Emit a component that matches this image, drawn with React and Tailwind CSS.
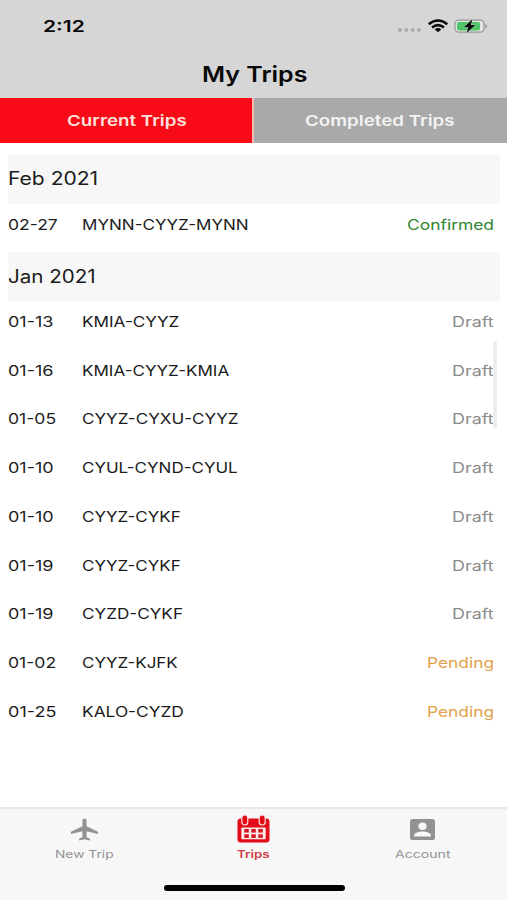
import { useLayoutEffect, useRef, useState } from "react";

// Wide lettering: the text is stretched horizontally to fill its given width.
function WideText({ width, className = "", children }) {
  const ref = useRef(null);
  const [scale, setScale] = useState(1.2);
  useLayoutEffect(() => {
    setScale(width / ref.current.offsetWidth);
  }, [width, children]);
  return (
    <span className={`block shrink-0 ${className}`} style={{ width }}>
      <span
        ref={ref}
        className="inline-block origin-left whitespace-nowrap align-top"
        style={{ transform: `scaleX(${scale})` }}
      >
        {children}
      </span>
    </span>
  );
}

const months = [
  {
    title: "Feb 2021",
    width: 90,
    trips: [["02-27", 49.5, "MYNN-CYYZ-MYNN", 167, "Confirmed"]],
  },
  {
    title: "Jan 2021",
    width: 88,
    trips: [
      ["01-13", 46, "KMIA-CYYZ", 97, "Draft"],
      ["01-16", 46, "KMIA-CYYZ-KMIA", 147, "Draft"],
      ["01-05", 48.5, "CYYZ-CYXU-CYYZ", 157, "Draft"],
      ["01-10", 46, "CYUL-CYND-CYUL", 156, "Draft"],
      ["01-10", 46, "CYYZ-CYKF", 98.5, "Draft"],
      ["01-19", 46, "CYYZ-CYKF", 98.5, "Draft"],
      ["01-19", 46, "CYZD-CYKF", 100.5, "Draft"],
      ["01-02", 48.5, "CYYZ-KJFK", 96, "Pending"],
      ["01-25", 48.5, "KALO-CYZD", 101.5, "Pending"],
    ],
  },
];

const statusStyle = {
  Confirmed: { width: 86.5, color: "text-[#2f8432]" },
  Draft: { width: 42, color: "text-[#8c8c8c]" },
  Pending: { width: 67, color: "text-[#e3a04a]" },
};

function StatusIcons() {
  return (
    <svg className="h-5 w-[92px]" viewBox="0 0 92 20">
      <g fill="#aaa">
        <circle cx="3" cy="14" r="2" />
        <circle cx="9.3" cy="14" r="2" />
        <circle cx="15.6" cy="14" r="2" />
        <circle cx="21.9" cy="14" r="2" />
      </g>
      <g fill="none" stroke="#080808" strokeWidth="2.5">
        <path d="M31.7 8.2Q41 .9 50.3 8.2" />
        <path d="M35 11.4Q41 6.8 47 11.4" />
      </g>
      <path d="M37.6 13.2Q41 10.9 44.4 13.2L41 16.2Z" fill="#080808" />
      <rect x="58" y="4.2" width="29" height="12" rx="3.6" fill="#e1e5e1" stroke="#959795" strokeWidth="1.2" />
      <rect x="60" y="6" width="23" height="8.4" rx="1.8" fill="#4dc568" />
      <path d="M88.4 8Q91.5 10.2 88.4 12.4Z" fill="#8d8f8d" />
      <path d="M75.4 3.2L66.8 11.2H71.2L69.7 16.9L78.3 9H73.8Z" fill="#080808" stroke="#c5e6cc" strokeWidth=".9" paintOrder="stroke" />
    </svg>
  );
}

function PlaneIcon() {
  return (
    <svg className="h-[23px] w-[27px]" viewBox="2 1.5 20 21" preserveAspectRatio="none" fill="#929292">
      <path d="M22 16v-2l-8.5-5V3.5C13.5 2.67 12.83 2 12 2s-1.5.67-1.5 1.5V9L2 14v2l8.5-2.5V19L8 20.5V22l4-1 4 1v-1.5L13.5 19v-5.5z" />
    </svg>
  );
}

function CalendarIcon() {
  return (
    <svg className="h-[28px] w-[33px]" viewBox="0 0 33 28">
      <rect x=".5" y="3.5" width="32" height="24" rx="3" fill="#e20d18" />
      <rect x="4.8" y="0" width="6" height="10" rx="3" fill="#e20d18" stroke="#fae3e3" strokeWidth="1.2" />
      <rect x="22.2" y="0" width="6" height="10" rx="3" fill="#e20d18" stroke="#fae3e3" strokeWidth="1.2" />
      <rect x="4.3" y="12.5" width="24.4" height="11.7" rx="1" fill="#fbeaea" />
      <g fill="#d81820">
        <rect x="7.3" y="14" width="4.5" height="3.6" />
        <rect x="14.3" y="14" width="4.5" height="3.6" />
        <rect x="21.3" y="14" width="4.5" height="3.6" />
        <rect x="7.3" y="19.3" width="4.5" height="3.6" />
        <rect x="14.3" y="19.3" width="4.5" height="3.6" />
        <rect x="21.3" y="19.3" width="4.5" height="3.6" />
      </g>
    </svg>
  );
}

function AccountIcon() {
  return (
    <svg className="h-[21px] w-[25px]" viewBox="0 0 25 21">
      <rect width="25" height="21" rx="2.8" fill="#929292" />
      <ellipse cx="12.5" cy="7.2" rx="4.1" ry="3.7" fill="#f7f7f7" />
      <path d="M4.2 17.5V16.2C4.2 13.7 9.2 12.5 12.5 12.5S20.8 13.7 20.8 16.2V17.5Z" fill="#f7f7f7" />
    </svg>
  );
}

function TabItem({ icon, label, width, className }) {
  return (
    <div className={`flex flex-1 flex-col items-center text-[10.5px] leading-4 ${className}`}>
      <div className="flex h-[37px] items-center justify-center pt-px">{icon}</div>
      <WideText width={width}>{label}</WideText>
    </div>
  );
}

export default function App() {
  return (
    <div className="flex h-[900px] w-[507px] flex-col overflow-hidden bg-white font-['Inter','Liberation_Sans',sans-serif] text-[#1c1c1c]">
      <header className="h-[98px] bg-[#d6d6d6] text-[#080808]">
        <div className="flex h-[52px] items-center justify-between pr-[18px] pl-[43px]">
          <WideText width={42} className="text-[16px] font-semibold">2:12</WideText>
          <StatusIcons />
        </div>
        <div className="flex h-[46px] items-center justify-center pl-[2px]">
          <WideText width={106} className="text-[21px] leading-7 font-semibold">My Trips</WideText>
        </div>
      </header>

      <div className="flex h-[44.5px] shrink-0 text-[15px] font-semibold">
        <div className="flex w-[254px] items-center justify-center border-r-2 border-[#f3bdb6] bg-[#f80b16] pt-px pl-px text-[#fde0dc]">
          <WideText width={120}>Current Trips</WideText>
        </div>
        <div className="flex flex-1 items-center justify-center bg-[#a9a9a9] pt-px pr-px text-[#f3f3f3]">
          <WideText width={150}>Completed Trips</WideText>
        </div>
      </div>

      <main className="relative flex-1 pt-[12.5px] pr-[7px] pl-2 [font-feature-settings:'case']">
        {months.map((month) => (
          <section key={month.title}>
            <h2 className="flex h-[48.5px] items-center bg-[#f7f7f7] pb-px text-[18px]">
              <WideText width={month.width} className="-ml-[0.5px]">{month.title}</WideText>
            </h2>
            {month.trips.map(([date, dateWidth, route, routeWidth, status], i) => (
              <div key={i} className="flex h-[48.75px] items-start pt-[8px] pr-[6.5px] text-[14.5px] leading-[25px]">
                <div className="w-[73.5px]">
                  <WideText width={dateWidth} className="-ml-[0.5px]">{date}</WideText>
                </div>
                <WideText width={routeWidth}>{route}</WideText>
                <WideText width={statusStyle[status].width} className={`ml-auto ${statusStyle[status].color}`}>
                  {status}
                </WideText>
              </div>
            ))}
          </section>
        ))}
        <div className="absolute top-[198px] right-[10px] h-[88px] w-1 rounded-full bg-[#ededed]" />
      </main>

      <nav className="flex h-[93px] shrink-0 flex-col border-t-2 border-[#e6e6e6] bg-[#f7f7f7]">
        <div className="flex pt-px">
          <TabItem icon={<PlaneIcon />} label="New Trip" width={59} className="text-[#929292]" />
          <TabItem icon={<CalendarIcon />} label="Trips" width={33} className="font-semibold text-[#cf4045]" />
          <TabItem icon={<AccountIcon />} label="Account" width={55} className="text-[#929292]" />
        </div>
        <div className="mx-auto mt-[22px] h-[6px] w-[181px] translate-x-px rounded-full bg-black" />
      </nav>
    </div>
  );
}
